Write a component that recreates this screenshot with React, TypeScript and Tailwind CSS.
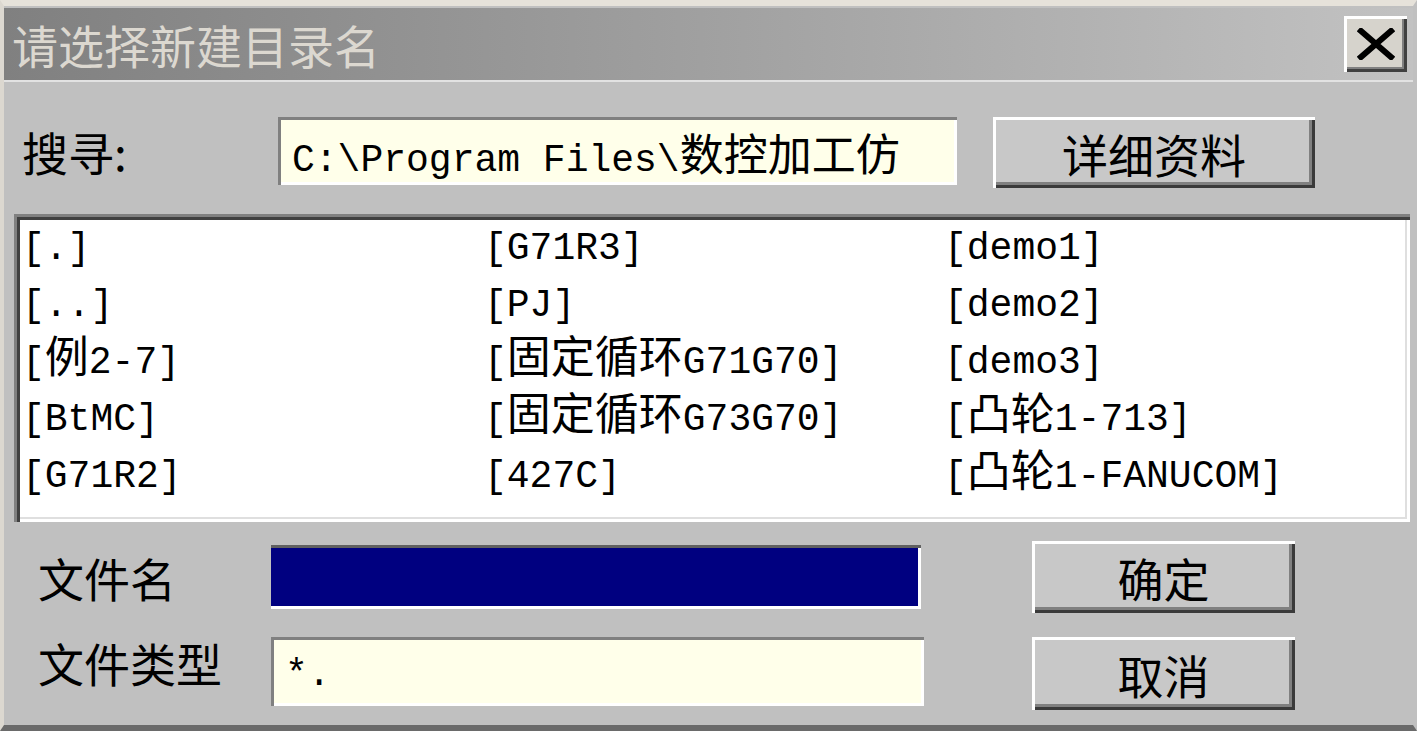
import React from "react";

const cjk = /([\u3400-\u9fff]+)/;

function Mixed({ text }: { text: string }) {
  return (
    <>
      {text.split(cjk).map((part, i) =>
        cjk.test(part) ? (
          <span key={i} className="font-['Noto_Sans_CJK_SC',sans-serif] text-[44px] leading-[0]">
            {part}
          </span>
        ) : (
          <span key={i}>{part}</span>
        )
      )}
    </>
  );
}

const files = [
  "[.]", "[..]", "[例2-7]", "[BtMC]", "[G71R2]",
  "[G71R3]", "[PJ]", "[固定循环G71G70]", "[固定循环G73G70]", "[427C]",
  "[demo1]", "[demo2]", "[demo3]", "[凸轮1-713]", "[凸轮1-FANUCOM]",
];

function Button({ label, className }: { label: string; className: string }) {
  return (
    <button
      type="button"
      className={`flex items-center justify-center bg-[#c8c8c8] text-[46px] leading-none text-black shadow-[inset_3px_3px_0_#ffffff,inset_-3px_-3px_0_#3a3a3a,inset_-6px_-6px_0_#808080] ${className}`}
    >
      {label}
    </button>
  );
}

export default function App() {
  return (
    <div className="w-[1417px] h-[731px] overflow-hidden bg-[#c0c0c0] flex flex-col border-t-[6px] border-l-[4px] border-r-[4px] border-b-[6px] border-t-[#e6e2da] border-l-[#dcd8d0] border-r-[#c0c0c0] border-b-[#6a6a6a] font-['Noto_Sans_CJK_SC',sans-serif] text-black">
      {/* title bar */}
      <div className="mt-[2px] h-[72px] flex items-center justify-between bg-linear-to-r from-[#808080] to-[#c2c2c2]">
        <span className="pl-[8px] text-[46px] leading-none text-[#dcd8d0]">请选择新建目录名</span>
        <button
          type="button"
          className="mr-[6px] w-[63px] h-[56px] flex items-center justify-center bg-[#d6d3cc] shadow-[inset_3px_3px_0_#ffffff,inset_-3px_-3px_0_#404040,inset_-5px_-5px_0_#808080]"
        >
          <svg width="38" height="32" viewBox="0 0 38 32">
            <path d="M4 3 L34 29 M34 3 L4 29" stroke="#000" strokeWidth="6" strokeLinecap="square" fill="none" />
          </svg>
        </button>
      </div>
      <div className="h-[2px] bg-[#e2e2e2]" />

      {/* search row */}
      <div className="mt-[35px] flex items-start">
        <div className="ml-[18px] w-[256px] h-[68px] flex items-center text-[46px] leading-none">搜寻:</div>
        <div className="w-[679px] h-[68px] bg-[#ffffea] overflow-hidden whitespace-nowrap pl-[14px] pt-[24px] shadow-[inset_3px_3px_0_#808080,inset_-3px_-3px_0_#ffffff] font-['Liberation_Mono','Noto_Sans_CJK_SC',monospace] text-[38px] leading-[40px]">
          <Mixed text="C:\Program Files\数控加工仿" />
        </div>
        <Button label="详细资料" className="ml-[36px] w-[322px] h-[71px]" />
      </div>

      {/* directory list */}
      <div className="mt-[26px] ml-[10px] w-[1396px] h-[308px] bg-white pt-[6px] pl-[8px] shadow-[inset_3px_3px_0_#808080,inset_6px_6px_0_#404040,inset_-3px_-3px_0_#ffffff,inset_-5px_-5px_0_#dfdfdf]">
        <div className="grid grid-flow-col grid-rows-[repeat(5,57px)] grid-cols-[462px_460px_1fr] font-['Liberation_Mono','Noto_Sans_CJK_SC',monospace] text-[38px] leading-[40px]">
          {files.map((f) => (
            <div key={f} className="flex items-center whitespace-nowrap">
              <div className="h-[40px] leading-[40px]">
                <Mixed text={f} />
              </div>
            </div>
          ))}
        </div>
      </div>

      {/* file name row */}
      <div className="mt-[19px] flex items-center h-[72px]">
        <div className="ml-[34px] w-[233px] text-[46px] leading-none">文件名</div>
        <div className="w-[650px] h-[64px] bg-[#000080] shadow-[inset_0_3px_0_#606060,inset_0_-3px_0_#ffffff,inset_-3px_0_0_#ffffff]" />
        <Button label="确定" className="ml-[111px] w-[263px] h-[72px]" />
      </div>

      {/* file type row */}
      <div className="mt-[24px] flex items-start">
        <div className="ml-[34px] w-[233px] pt-[2px] text-[46px] leading-none">文件类型</div>
        <div className="w-[653px] h-[69px] bg-[#ffffea] flex items-end pl-[14px] pb-[12px] shadow-[inset_3px_3px_0_#808080,inset_-3px_-3px_0_#ffffff] font-['Liberation_Mono',monospace] text-[38px] leading-none">
          *.
        </div>
        <Button label="取消" className="ml-[108px] w-[263px] h-[73px]" />
      </div>
    </div>
  );
}
